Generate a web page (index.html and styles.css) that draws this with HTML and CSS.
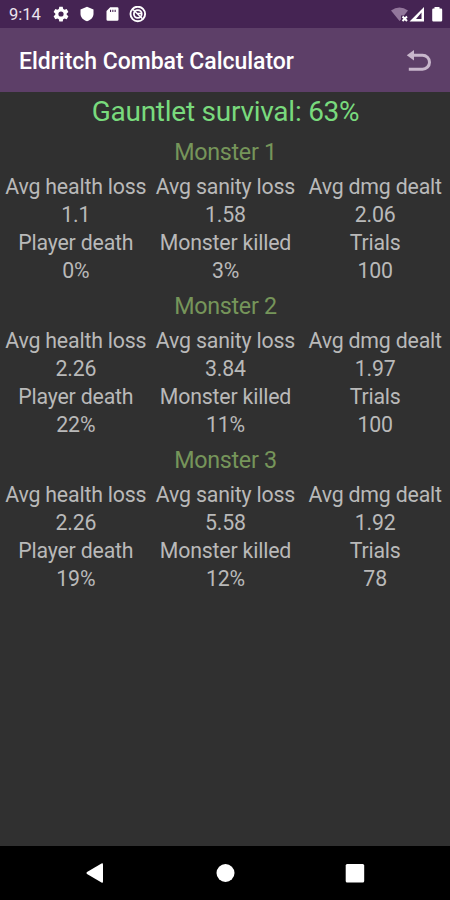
FILE: index.html
```html
<!DOCTYPE html>
<html lang="en">
<head>
<meta charset="utf-8">
<title>Eldritch Combat Calculator</title>
<link rel="stylesheet" href="styles.css">
</head>
<body>
<header class="status">
  <span class="time">9:14</span>
  <svg class="notices" width="94" height="18" viewBox="0 0 94 18">
    <g fill="#fff">
      <path fill-rule="evenodd" d="M6.300.8h3.400l.5 2.100 1.400.8 2.100-.7 1.700 3-1.700 1.400v1.400l1.700 1.400-1.700 3-2.100-.7-1.400.8-.5 2.100H6.300l-.5-2.100-1.400-.8-2.100.7-1.700-3 1.700-1.400V7.400L.6 6l1.700-3 2.100.7 1.400-.8zM8 5.400a2.600 2.600 0 1 0 0 5.200 2.600 2.600 0 1 0 0-5.200z"/>
      <path d="M34 .8l6.500 2.700v4.200c0 3.500-2.600 6.400-6.500 7.500-3.900-1.100-6.500-4-6.500-7.500V3.500z"/>
      <path fill-rule="evenodd" d="M57.200 1.200h7q1.300 0 1.300 1.300v11q0 1.300-1.300 1.300h-9.400q-1.300 0-1.300-1.300V5zM57 3.800v2.200h1.100V3.800zm2.300 0v2.200h1.100V3.800zm2.300 0v2.200h1.100V3.800z"/>
    </g>
    <g fill="none" stroke="#fff">
      <circle cx="84.800" cy="8" r="7.300" stroke-width="1.900"/>
      <circle cx="84.800" cy="8" r="3.900" stroke-width="1.800"/>
      <path d="M80 3.500l9.500 9.200M84 7.500h4.500" stroke-width="1.500"/>
    </g>
  </svg>
  <svg class="signals" width="52" height="18" viewBox="0 0 52 18">
    <path d="M0 4.500Q8.500-1.500 17 4.500L13 9.500H10V13.500L8.500 15z" fill="#92769b"/>
    <path d="M11.500 10.500l4.500 4.500m0-4.500l-4.500 4.500" stroke="#fff" stroke-width="2"/>
    <path fill-rule="evenodd" d="M33 1v14.500H18.500zM30.500 6.500l-5.500 6.500h5.500z" fill="#fff"/>
    <path d="M43.500 1h5v1.500h1.500q1.200 0 1.200 1.200v10.600q0 1.200-1.200 1.200h-7.600q-1.200 0-1.200-1.200V3.700q0-1.200 1.200-1.200h1.100z" fill="#fff"/>
  </svg>
</header>
<div class="toolbar">
  <h1>Eldritch Combat Calculator</h1>
  <svg width="26" height="24" viewBox="0 0 26 24">
    <path d="M4 6.200h12.500a6.800 6.800 0 0 1 0 14H2.800" fill="none" stroke="#c8b7cc" stroke-width="3"/>
    <path d="M.8 6.200L8 1v10.400z" fill="#c8b7cc"/>
  </svg>
</div>
<main>
  <h2>Gauntlet survival: 63%</h2>
  <section>
    <h3>Monster 1</h3>
    <div class="stats">
      <span>Avg health loss</span><span>Avg sanity loss</span><span>Avg dmg dealt</span>
      <span>1.1</span><span>1.58</span><span>2.06</span>
      <span>Player death</span><span>Monster killed</span><span>Trials</span>
      <span>0%</span><span>3%</span><span>100</span>
    </div>
  </section>
  <section>
    <h3>Monster 2</h3>
    <div class="stats">
      <span>Avg health loss</span><span>Avg sanity loss</span><span>Avg dmg dealt</span>
      <span>2.26</span><span>3.84</span><span>1.97</span>
      <span>Player death</span><span>Monster killed</span><span>Trials</span>
      <span>22%</span><span>11%</span><span>100</span>
    </div>
  </section>
  <section>
    <h3>Monster 3</h3>
    <div class="stats">
      <span>Avg health loss</span><span>Avg sanity loss</span><span>Avg dmg dealt</span>
      <span>2.26</span><span>5.58</span><span>1.92</span>
      <span>Player death</span><span>Monster killed</span><span>Trials</span>
      <span>19%</span><span>12%</span><span>78</span>
    </div>
  </section>
</main>
<nav>
  <svg width="450" height="54" viewBox="0 1 450 54" fill="#fff">
    <path d="M101.500 18.500q1.500-.7 1.500 1v17q0 1.700-1.500 1L87 29q-1.200-1 0-2z"/>
    <circle cx="225.500" cy="28" r="9"/>
    <rect x="345.700" y="19" width="18.500" height="18.500" rx="1.500"/>
  </svg>
</nav>
</body>
</html>
```
FILE: styles.css
```css
* { box-sizing: border-box; }

body {
  margin: 0;
  height: 900px;
  display: flex;
  flex-direction: column;
  overflow: hidden;
  background: #303030;
  color: #b9b9b9;
  font-family: Roboto, sans-serif;
}

h1, h2, h3 { margin: 0; }

.status {
  height: 28px;
  display: flex;
  align-items: flex-start;
  padding: 6px 7px 0 9px;
  background: #452453;
}

.time {
  width: 44px;
  font-size: 16.500px;
  line-height: 18px;
  color: #ece4ee;
}

.signals { margin-left: auto; }

.toolbar {
  height: 64px;
  display: flex;
  align-items: center;
  justify-content: space-between;
  padding: 2px 18px 0 19px;
  background: #5d3f68;
}

h1 {
  font-size: 23px;
  font-weight: 500;
  letter-spacing: -0.03px;
  color: #fff;
}

main {
  flex: 1;
  padding-left: 1px;
  text-align: center;
}

h2 {
  height: 39px;
  font-size: 28px;
  letter-spacing: -0.25px;
  line-height: 39px;
  font-weight: 400;
  color: #79da7d;
}

h3 {
  height: 42px;
  font-size: 23.300px;
  letter-spacing: -0.3px;
  line-height: 42px;
  font-weight: 400;
  color: #76955a;
}

.stats {
  display: grid;
  grid-template-columns: repeat(3, 1fr);
  grid-auto-rows: 28px;
  font-size: 21.300px;
  letter-spacing: -0.18px;
  line-height: 28px;
  white-space: nowrap;
}

nav {
  height: 54px;
  background: #000;
}

nav svg { display: block; }
```
